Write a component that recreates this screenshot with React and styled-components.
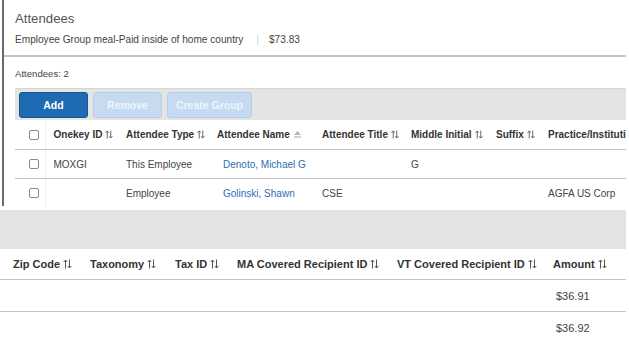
import styled, { createGlobalStyle } from "styled-components";

const GlobalStyle = createGlobalStyle`
  body {
    margin: 0;
    background: #fff;
    font-family: "Liberation Sans", Arial, sans-serif;
    color: #444;
  }
`;

const Page = styled.div`
  width: 626px;
`;

const Panel = styled.section`
  margin-left: 2px;
  border-left: 2px solid #6a6a6a;
  height: 206px;
  overflow: hidden;
`;

const Header = styled.header`
  padding: 11px 0 0 11px;
  height: 44px;
  border-bottom: 2px solid #c4c4c4;
`;

const Title = styled.h2`
  margin: 0;
  font-size: 13.2px;
  font-weight: normal;
  line-height: 16px;
  color: #555;
`;

const Subtitle = styled.div`
  margin-top: 6px;
  display: flex;
  align-items: center;
  font-size: 10.1px;
  line-height: 14px;
  color: #444;

  .sep {
    color: #d4d4d4;
    margin: 0 10px 0 13px;
  }
`;

const Body = styled.div`
  padding-left: 11px;
`;

const Count = styled.div`
  font-size: 9.6px;
  line-height: 14px;
  padding: 10px 0 7px;
  color: #444;
`;

const Toolbar = styled.div`
  display: flex;
  gap: 5px;
  height: 32px;
  box-sizing: border-box;
  padding: 3px 4px;
  background: #e4e4e4;
  border-top: 1px solid #d6d6d6;
`;

const Button = styled.button`
  height: 26px;
  padding: 0;
  width: ${(p) => p.$w}px;
  border-radius: 3px;
  font-family: inherit;
  font-size: 10.5px;
  font-weight: bold;
  color: ${(p) => (p.$primary ? "#fff" : "#eef4fb")};
  background: ${(p) => (p.$primary ? "#1e6bb3" : "#c6dbef")};
  border: 1px solid ${(p) => (p.$primary ? "#17558f" : "#b6cfe8")};
`;

const Table = styled.table`
  border-collapse: collapse;
  table-layout: fixed;
  width: ${(p) => p.$width}px;
  font-size: ${(p) => p.$size}px;
`;

const Th = styled.th`
  text-align: left;
  font-weight: bold;
  color: #333;
  white-space: nowrap;
  padding: 0 0 0 ${(p) => p.$pad ?? 8}px;
  height: ${(p) => p.$h}px;
  border-bottom: ${(p) => p.$line};
`;

const Td = styled.td`
  white-space: nowrap;
  color: #444;
  padding: 0 0 0 ${(p) => p.$pad ?? 8}px;
  height: ${(p) => p.$h}px;
  border-bottom: ${(p) => p.$line || "none"};
`;

const CheckCell = styled.td`
  padding: 0 0 0 14px;
  border-right: 1px solid #efefef;
  border-bottom: ${(p) => p.$line || "none"};
  height: 28px;
`;

const Check = styled.span`
  display: block;
  width: 8px;
  height: 8px;
  border: 1px solid #8a8a8a;
  border-radius: 2px;
  background: #fff;
`;

const Link = styled.a`
  color: #2e6db4;
  text-decoration: none;
  margin-left: 6px;
`;

const Icon = styled.svg`
  margin-left: 3px;
  vertical-align: -1px;
`;

const Band = styled.div`
  margin-top: 4px;
  height: 39px;
  background: #e3e3e3;
`;

const SortIcon = ({ small }) => (
  <Icon
    width={small ? 8 : 9}
    height={small ? 9 : 10}
    viewBox="0 0 9 10"
    fill="none"
    stroke="#555"
    strokeWidth="1"
  >
    <path d="M2.5 9.5V1M0.7 3L2.5 1L4.3 3" />
    <path d="M6.5 0.5V9M4.7 7L6.5 9L8.3 7" />
  </Icon>
);

const SortedIcon = () => (
  <Icon width="9" height="9" viewBox="0 0 9 9">
    <polygon points="1,5 4.5,1 8,5" fill="#b5b5b5" />
    <rect x="1" y="6.4" width="7" height="1.2" fill="#b5b5b5" />
  </Icon>
);

const topCols = [30, 73, 91, 105, 89, 85, 52, 170];
const topLine = "1px solid #c2c2c2";

const bottomCols = [82, 85, 62, 160, 156, 81];
const bottomHeads = ["Zip Code", "Taxonomy", "Tax ID", "MA Covered Recipient ID", "VT Covered Recipient ID", "Amount"];

const attendees = [
  { id: "MOXGI", type: "This Employee", name: "Denoto, Michael G", title: "", mi: "G", suffix: "", org: "", amount: "$36.91" },
  { id: "", type: "Employee", name: "Golinski, Shawn", title: "CSE", mi: "", suffix: "", org: "AGFA US Corp", amount: "$36.92" },
];

export default function App() {
  const sum = (a) => a.reduce((s, v) => s + v, 0);
  return (
    <Page>
      <GlobalStyle />
      <Panel>
        <Header>
          <Title>Attendees</Title>
          <Subtitle>
            Employee Group meal-Paid inside of home country
            <span className="sep">|</span>
            $73.83
          </Subtitle>
        </Header>
        <Body>
          <Count>Attendees: 2</Count>
          <Toolbar>
            <Button $primary $w={69}>Add</Button>
            <Button $w={69}>Remove</Button>
            <Button $w={85}>Create Group</Button>
          </Toolbar>
          <Table $width={sum(topCols)} $size={10}>
            <colgroup>
              {topCols.map((w, i) => (
                <col key={i} style={{ width: w }} />
              ))}
            </colgroup>
            <thead>
              <tr>
                <CheckCell as="th" $line={topLine}>
                  <Check />
                </CheckCell>
                <Th $h={29} $line={topLine}>Onekey ID<SortIcon small /></Th>
                <Th $h={29} $line={topLine}>Attendee Type<SortIcon small /></Th>
                <Th $h={29} $line={topLine}>Attendee Name<SortedIcon /></Th>
                <Th $h={29} $line={topLine}>Attendee Title<SortIcon small /></Th>
                <Th $h={29} $line={topLine}>Middle Initial<SortIcon small /></Th>
                <Th $h={29} $line={topLine}>Suffix<SortIcon small /></Th>
                <Th $h={29} $line={topLine}>Practice/Institution</Th>
              </tr>
            </thead>
            <tbody>
              {attendees.map((a, i) => {
                const line = i === 0 ? topLine : "none";
                return (
                  <tr key={i}>
                    <CheckCell $line={line}>
                      <Check />
                    </CheckCell>
                    <Td $h={28} $line={line}>{a.id}</Td>
                    <Td $h={28} $line={line}>{a.type}</Td>
                    <Td $h={28} $line={line}><Link href="#">{a.name}</Link></Td>
                    <Td $h={28} $line={line}>{a.title}</Td>
                    <Td $h={28} $line={line}>{a.mi}</Td>
                    <Td $h={28} $line={line}>{a.suffix}</Td>
                    <Td $h={28} $line={line}>{a.org}</Td>
                  </tr>
                );
              })}
            </tbody>
          </Table>
        </Body>
      </Panel>

      <Band />
      <Table $width={sum(bottomCols)} $size={11}>
        <colgroup>
          {bottomCols.map((w, i) => (
            <col key={i} style={{ width: w }} />
          ))}
        </colgroup>
        <thead>
          <tr>
            {bottomHeads.map((h, i) => (
              <Th key={h} $h={30} $pad={i === 0 ? 13 : 8} $line={topLine}>
                {h}
                <SortIcon />
              </Th>
            ))}
          </tr>
        </thead>
        <tbody>
          {attendees.map((a, i) => (
            <tr key={i}>
              {bottomCols.slice(0, 5).map((_, j) => (
                <Td key={j} $h={31} $line={i === 0 ? topLine : "none"} />
              ))}
              <Td $h={31} $pad={11} $line={i === 0 ? topLine : "none"}>{a.amount}</Td>
            </tr>
          ))}
        </tbody>
      </Table>
    </Page>
  );
}
